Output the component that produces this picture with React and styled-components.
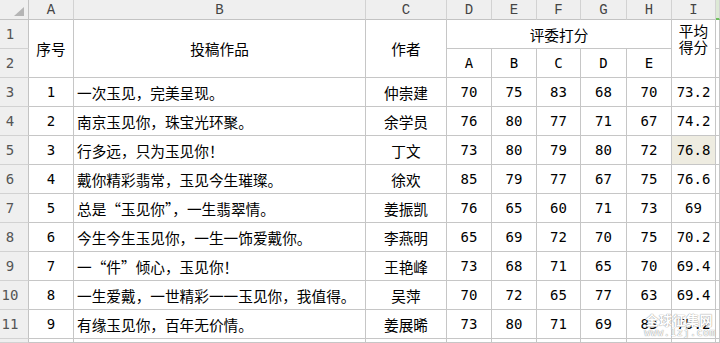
import React from 'react';
import styled, { createGlobalStyle } from 'styled-components';

const GlobalStyle = createGlobalStyle`
  html, body {
    margin: 0;
    padding: 0;
    background: #ffffff;
  }
`

const cjk = `"Noto Sans CJK SC", "Noto Sans", sans-serif`;
const mono = `"DejaVu Sans Mono", "Noto Sans CJK SC", monospace`;

const Page = styled.div`
  position: relative;
  width: 720px;
  height: 343px;
  overflow: hidden;
`

const Sheet = styled.div`
  display: grid;
  grid-template-columns: 29px 45px 292px 81px 45px 45px 44px 46px 45px 44px 1fr;
  grid-template-rows: 20px repeat(11, 29px) 1fr;
  width: 720px;
  height: 343px;
  color: #000;
`

const ColHead = styled.div`
  box-sizing: border-box;
  display: flex;
  align-items: center;
  justify-content: center;
  background: ${props => (props.$active ? '#dde9d6' : '#efefef')};
  border-right: 1px solid #d2d2d2;
  border-bottom: ${props => (props.$active ? '2px solid #6cbd5c' : '1px solid #c3c3c3')};
  font-family: "Liberation Mono", monospace;
  font-size: 14px;
  color: #444;
  padding-top: 1px;
`

const Corner = styled(ColHead)`
  align-items: flex-end;
  justify-content: flex-end;
  padding: 0 4px 3px 0;
  border-right: 1px solid #c3c3c3;
`

const RowHead = styled.div`
  box-sizing: border-box;
  display: flex;
  align-items: center;
  justify-content: center;
  padding-right: 8px;
  background: #efefef;
  border-right: 1px solid #c3c3c3;
  border-bottom: 1px solid #d2d2d2;
  font-family: "DejaVu Sans Mono", monospace;
  font-size: 14px;
  color: #555;
`

const Cell = styled.div`
  box-sizing: border-box;
  display: flex;
  align-items: ${props => props.$valign || 'center'};
  justify-content: ${props => (props.$left ? 'flex-start' : 'center')};
  grid-row: ${props => (props.$rows ? `span ${props.$rows}` : 'auto')};
  grid-column: ${props => (props.$cols ? `span ${props.$cols}` : 'auto')};
  padding: ${props => (props.$left ? '0 0 0 3px' : '0')};
  background: ${props => (props.$hl ? '#eeece1' : '#ffffff')};
  border-right: 1px solid #c6c6c6;
  border-bottom: 1px solid #c6c6c6;
  font-family: ${props => (props.$mono ? mono : cjk)};
  font-size: ${props => (props.$mono ? '14px' : '14.67px')};
  line-height: 17px;
  white-space: nowrap;
`

const Stack = styled.span`
  display: block;
  padding-top: 3px;
  text-align: center;
  line-height: 16px;
`

const Watermark = styled.div`
  position: absolute;
  right: 4px;
  bottom: 5px;
  display: flex;
  flex-direction: column;
  align-items: flex-end;
  color: #ffffff;
  text-shadow: 0 0 1px #9a9a9a, 0 0 1px #9a9a9a;
  pointer-events: none;
`

const MarkTitle = styled.span`
  font-family: ${cjk};
  font-size: 13px;
  font-weight: 700;
  line-height: 14px;
  letter-spacing: 0.5px;
  margin-right: 3px;
`

const MarkUrl = styled.span`
  font-family: "DejaVu Sans Mono", monospace;
  font-size: 10px;
  line-height: 11px;
  letter-spacing: 0.5px;
`

const columns = ['A', 'B', 'C', 'D', 'E', 'F', 'G', 'H', 'I'];

const entries = [
  ['1', '一次玉见，完美呈现。', '仲崇建', [70, 75, 83, 68, 70], '73.2'],
  ['2', '南京玉见你，珠宝光环聚。', '余学员', [76, 80, 77, 71, 67], '74.2'],
  ['3', '行多远，只为玉见你！', '丁文', [73, 80, 79, 80, 72], '76.8'],
  ['4', '戴你精彩翡常，玉见今生璀璨。', '徐欢', [85, 79, 77, 67, 75], '76.6'],
  ['5', '总是“玉见你”，一生翡翠情。', '姜振凯', [76, 65, 60, 71, 73], '69'],
  ['6', '今生今生玉见你，一生一饰爱戴你。', '李燕明', [65, 69, 72, 70, 75], '70.2'],
  ['7', '一“件”倾心，玉见你！', '王艳峰', [73, 68, 71, 65, 70], '69.4'],
  ['8', '一生爱戴，一世精彩一一玉见你，我值得。', '吴萍', [70, 72, 65, 77, 63], '69.4'],
  ['9', '有缘玉见你，百年无价情。', '姜展晞', [73, 80, 71, 69, 83], '75.2'],
];

const CornerMark = () => (
  <svg width="10" height="9" viewBox="0 0 10 9">
    <polygon points="10,0 10,9 0,9" fill="#b5b5b5" />
  </svg>
);

const App = () => {
  return (
    <Page>
      <GlobalStyle />
      <Sheet>
        <Corner><CornerMark /></Corner>
        {columns.map(c => <ColHead key={c}>{c}</ColHead>)}
        <ColHead $active />

        <RowHead>1</RowHead>
        <Cell $rows={2}>序号</Cell>
        <Cell $rows={2}>投稿作品</Cell>
        <Cell $rows={2}>作者</Cell>
        <Cell $cols={5}>评委打分</Cell>
        <Cell $rows={2} $valign="flex-start">
          <Stack>平均<br />得分</Stack>
        </Cell>
        <Cell />

        <RowHead>2</RowHead>
        {['A', 'B', 'C', 'D', 'E'].map(j => <Cell key={j} $mono>{j}</Cell>)}
        <Cell />

        {entries.map(([no, title, author, scores, avg], i) => (
          <React.Fragment key={no}>
            <RowHead>{i + 3}</RowHead>
            <Cell $mono>{no}</Cell>
            <Cell $left>{title}</Cell>
            <Cell>{author}</Cell>
            {scores.map((s, k) => <Cell key={k} $mono>{s}</Cell>)}
            <Cell $mono $hl={no === '3'}>{avg}</Cell>
            <Cell />
          </React.Fragment>
        ))}

        <RowHead />
        {columns.map(c => <Cell key={c} />)}
        <Cell />
      </Sheet>
      <Watermark>
        <MarkTitle>全球征集网</MarkTitle>
        <MarkUrl>www.1zj.com</MarkUrl>
      </Watermark>
    </Page>
  )
}

export default App;
